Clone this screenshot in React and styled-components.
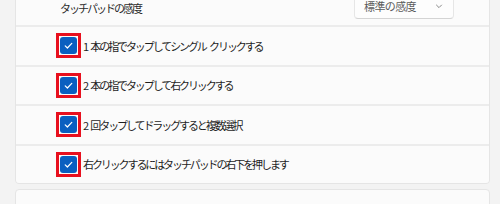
import styled, { createGlobalStyle } from 'styled-components';

const GlobalStyle = createGlobalStyle`
    html, body {
        margin: 0;
        padding: 0;
        background: #f3f3f3;
        overflow: hidden;
    }
    body {
        font-family: "Noto Sans CJK JP", "Noto Sans", sans-serif;
        color: #1b1b1b;
    }
`;

const options = [
    '1 本の指でタップしてシングル クリックする',
    '2 本の指でタップして右クリックする',
    '2 回タップしてドラッグすると複数選択',
    '右クリックするにはタッチパッドの右下を押します',
];

const App = () => {
    return (
        <>
            <GlobalStyle />
            <Page>
                <Card>
                    <HeaderRow>
                        <Label>タッチパッドの感度</Label>
                        <Dropdown>
                            <DropdownText>標準の感度</DropdownText>
                            <Chevron width="10" height="10" viewBox="0 0 10 10">
                                <path d="M2.2 3.8 L5 6.6 L7.8 3.8" fill="none" stroke="#8a8a8a" strokeWidth="1" />
                            </Chevron>
                        </Dropdown>
                    </HeaderRow>
                    {options.map(text => (
                        <OptionRow key={text}>
                            <Highlight>
                                <Checkbox>
                                    <svg width="17" height="17" viewBox="0 0 17 17">
                                        <path d="M5.2 8.8 L7.4 11 L11.8 6.4" fill="none" stroke="#fff" strokeWidth="1.2" strokeLinecap="round" strokeLinejoin="round" />
                                    </svg>
                                </Checkbox>
                            </Highlight>
                            <OptionText>{text}</OptionText>
                        </OptionRow>
                    ))}
                </Card>
                <NextCard />
            </Page>
        </>
    );
};

const Page = styled.div`
    display: flex;
    flex-direction: column;
    gap: 5px;
    margin: -15px 10px 0 15px;
`;

const Card = styled.div`
    display: flex;
    flex-direction: column;
    gap: 2px;
    background: #ececec;
    border: 1px solid #e5e5e5;
    border-radius: 4px;
    overflow: hidden;
`;

const Row = styled.div`
    display: flex;
    align-items: center;
    background: #fbfbfb;
`;

const HeaderRow = styled(Row)`
    height: 39px;
    justify-content: space-between;
    padding: 0 35px 0 44px;
`;

const OptionRow = styled(Row)`
    height: 37.5px;
    padding-left: 40px;
`;

const Label = styled.span`
    font-size: 11px;
    letter-spacing: -2px;
    margin-top: 4px;
    color: #2b2b2b;
`;

const Dropdown = styled.div`
    display: flex;
    align-items: center;
    justify-content: space-between;
    box-sizing: border-box;
    width: 100px;
    height: 26px;
    margin-top: 1px;
    padding: 0 9px 0 9px;
    background: #fdfdfd;
    border: 1px solid #e6e6e6;
    border-bottom-color: #d4d4d4;
    border-radius: 4px;
`;

const DropdownText = styled.span`
    font-size: 11px;
    letter-spacing: -0.6px;
    color: #5a5a5a;
`;

const Chevron = styled.svg`
    display: block;
`;

const Highlight = styled.span`
    display: flex;
    padding: 1px;
    border: 3px solid #e8101e;
`;

const Checkbox = styled.span`
    display: flex;
    width: 17px;
    height: 17px;
    background: #0a5fc0;
    border-radius: 3px;
`;

const OptionText = styled.span`
    margin-left: 2px;
    font-size: 11px;
    letter-spacing: -2.1px;
    word-spacing: 3px;
    color: #1e1e1e;
    white-space: nowrap;
`;

const NextCard = styled.div`
    height: 40px;
    background: #fbfbfb;
    border: 1px solid #e5e5e5;
    border-radius: 4px;
`;

export default App;
